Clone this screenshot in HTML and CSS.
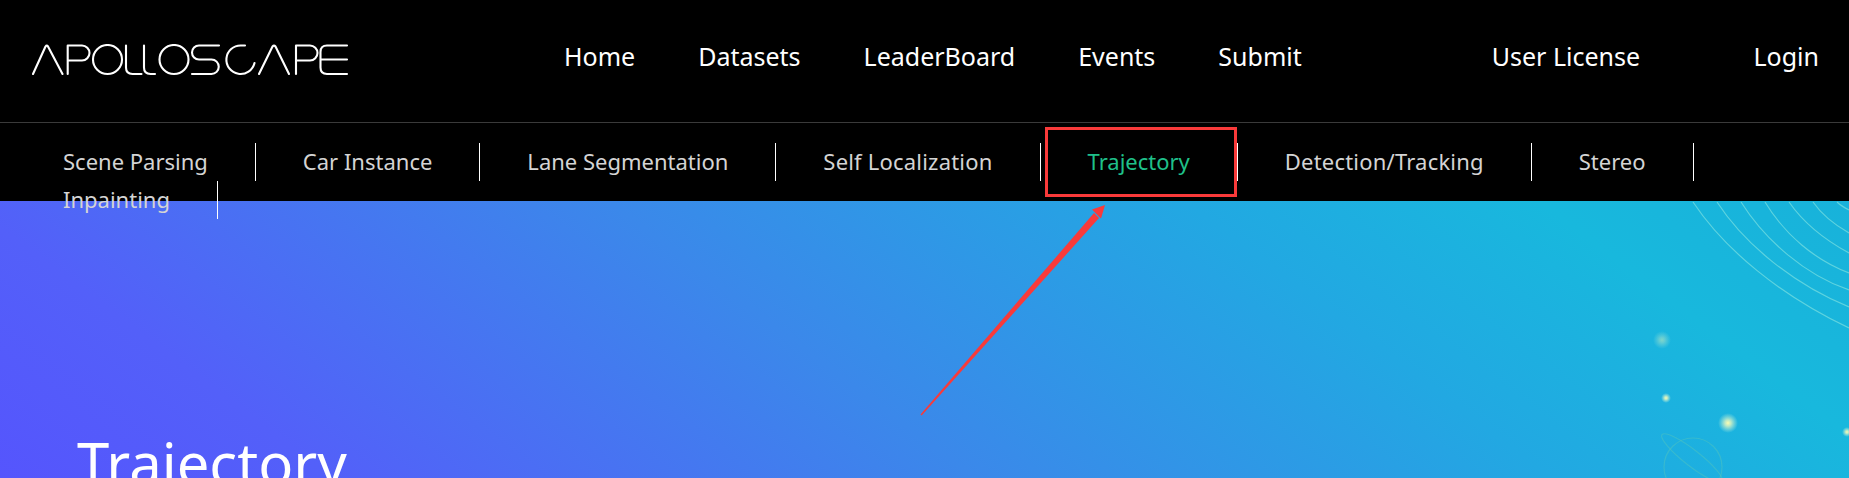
FILE: index.html
```html
<!DOCTYPE html>
<html lang="en">
<head>
  <title>Trajectory — ApolloScape</title>
  <meta charset="utf-8">
  <link rel="stylesheet" href="styles.css">
</head>
<body>

  <header class="topbar">
    <svg class="logo" viewBox="0 0 320 32" role="img" aria-label="ApolloScape">
      <g fill="none" stroke="#fff" stroke-width="2.100" stroke-linecap="round" stroke-linejoin="round">
        <path d="M1 30 L13.500 2.500 Q14.700 0.800 16 2.500 L30.500 30"/>
        <path d="M35.700 30 V1.500 H50 A7.500 7.500 0 0 1 50 16.500 H35.700"/>
        <circle cx="75.500" cy="15.500" r="14.500"/>
        <path d="M94 1.500 V23.500 Q94 30 100.500 30 H109.500"/>
        <path d="M112 1.500 V23.500 Q112 30 118.500 30 H123"/>
        <circle cx="142" cy="15.500" r="14.500"/>
        <path d="M187 1.500 H167 A7 7 0 0 0 167 15.500 H179.500 A7.250 7.250 0 0 1 179.500 30 H160"/>
        <path d="M213 1.500 H209 A14.250 14.250 0 1 0 222.500 19"/>
        <path d="M227 30 L240.500 2.500 Q242 0.800 243.500 2.500 L257 30"/>
        <path d="M264 30 V1.500 H278 A7.500 7.500 0 0 1 278 16.500 H264"/>
        <path d="M315 1.500 H295 Q288.500 1.500 288.500 8 V23.500 Q288.500 30 295 30 H315 M288.500 15.500 H315"/>
      </g>
    </svg>
    <nav class="mainnav">
      <a href="#">Home</a>
      <a href="#">Datasets</a>
      <a href="#">LeaderBoard</a>
      <a href="#">Events</a>
      <a href="#">Submit</a>
    </nav>
    <a class="license" href="#">User License</a>
    <a class="login" href="#">Login</a>
  </header>

  <nav class="subnav">
    <a href="#">Scene Parsing</a>
    <a href="#">Car Instance</a>
    <a href="#">Lane Segmentation</a>
    <a class="stretch" href="#">Self Localization</a>
    <a class="active" href="#">Trajectory</a>
    <a class="stretch" href="#">Detection/Tracking</a>
    <a href="#">Stereo</a>
    <a href="#">Inpainting</a>
  </nav>

  <main class="banner">
    <h1>Trajectory</h1>
    <svg class="deco" viewBox="0 0 299 288" aria-hidden="true">
      <defs>
        <radialGradient id="glow">
          <stop offset="0" stop-color="#fbfdb0"/>
          <stop offset="0.3" stop-color="#e6f7c0" stop-opacity="0.8"/>
          <stop offset="1" stop-color="#bdf0e0" stop-opacity="0"/>
        </radialGradient>
      </defs>
      <g fill="none" stroke="#6fdbe0" stroke-opacity="0.8" stroke-width="1.200">
        <path d="M143 12 C175 60 230 105 299 138"/>
        <path d="M167 12 C195 55 245 95 299 117"/>
        <path d="M191 12 C215 50 255 85 299 100"/>
        <path d="M215 12 C235 45 265 70 299 83"/>
        <path d="M239 12 C255 35 275 50 299 63"/>
        <path d="M263 12 C272 25 285 35 299 43"/>
        <path d="M287 12 C290 15 295 18 299 20"/>
      </g>
      <g fill="url(#glow)">
        <circle cx="112" cy="150" r="9" opacity="0.45"/>
        <circle cx="116" cy="208" r="5"/>
        <circle cx="178" cy="233" r="10"/>
        <circle cx="297" cy="242" r="5"/>
      </g>
      <g fill="none" stroke="#4fc3c0" stroke-opacity="0.5" stroke-width="1.200">
        <circle cx="143" cy="277" r="29"/>
        <ellipse cx="142" cy="268" rx="38" ry="8" transform="rotate(38 142 268)"/>
      </g>
    </svg>
  </main>

  <!-- annotation drawn over the screenshot -->
  <div class="markbox"></div>
  <svg class="markarrow" viewBox="0 0 240 240" aria-hidden="true">
    <path d="M40.500 224.500 L41.700 225.600 L219 28 L214 23 Z" fill="#f93a3a"/>
    <path d="M225 15 L212 19.500 L221 28.500 Z" fill="#f93a3a"/>
  </svg>

</body>
</html>
```

FILE: styles.css
```css
*, *::before, *::after {
  margin: 0;
  padding: 0;
  box-sizing: border-box;
}

html, body {
  height: 478px;
  overflow: hidden;
}

body {
  position: relative;
  background-color: #000;
  font-family: "Noto Sans", "Open Sans", sans-serif;
}

a {
  color: inherit;
  text-decoration: none;
}

.topbar {
  height: 123px;
  padding: 0 30px 10px 32px;
  display: flex;
  align-items: center;
  color: #fff;
  font-size: 25px;
  border-bottom: 1px solid #3a3a3a;
}

.logo {
  width: 320px;
  height: 32px;
  margin-top: 8px;
  flex: none;
}

.mainnav {
  margin-left: 212px;
  display: flex;
  gap: 63px;
}

.license {
  margin-left: 190px;
}

.login {
  margin-left: auto;
}

.subnav {
  position: relative;
  z-index: 1;
  height: 78px;
  padding: 20px 0 0 16px;
  display: flex;
  flex-wrap: wrap;
  align-items: flex-start;
  align-content: flex-start;
  color: #d4d4d4;
  font-size: 22px;
  line-height: 36px;
}

.subnav a {
  height: 38px;
  padding: 0 47px;
  border-right: 1px solid #fff;
}

.subnav a.stretch {
  letter-spacing: 0.2px;
}

.subnav a.active {
  color: #1fc08a;
}

.banner {
  position: relative;
  height: 277px;
  overflow: hidden;
  background: linear-gradient(37deg, #5555fd 0%, #5360f9 15%, #3b88ea 44%, #22a8e2 70%, #18b8dd 86%, #18b2da 100%);
}

.banner h1 {
  padding: 222px 0 0 77px;
  color: #fff;
  font-size: 58px;
  font-weight: 400;
  line-height: 80px;
}

.deco {
  position: absolute;
  top: -11px;
  right: 0;
  width: 299px;
  height: 288px;
}

.markbox {
  position: absolute;
  z-index: 2;
  top: 127px;
  left: 1045px;
  width: 192px;
  height: 70px;
  border: 3px solid #f93a3a;
}

.markarrow {
  position: absolute;
  z-index: 2;
  top: 190px;
  left: 880px;
  width: 240px;
  height: 240px;
}
```
